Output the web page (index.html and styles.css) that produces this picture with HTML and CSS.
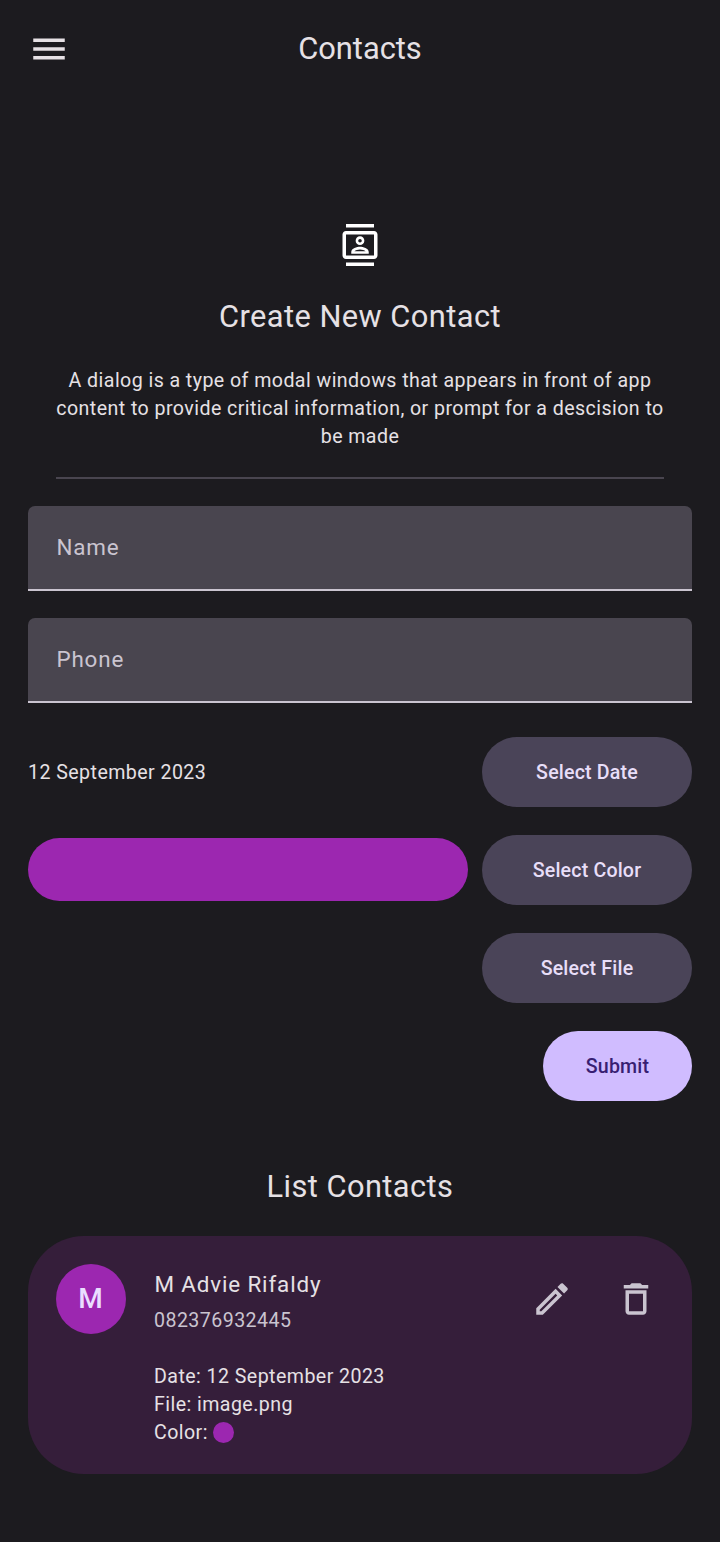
FILE: index.html
```html
<!DOCTYPE html>
<html lang="en">
<head>
<meta charset="utf-8">
<title>Contacts</title>
<link rel="stylesheet" href="styles.css">
</head>
<body>
<header class="appbar">
  <svg class="menu" viewBox="0 0 24 24"><path d="M3 18h18v-2H3v2zm0-5h18v-2H3v2zm0-7v2h18V6H3z"/></svg>
  <h1>Contacts</h1>
</header>
<main>
  <section class="intro">
    <svg class="intro-icon" viewBox="0 0 24 24"><path d="M20 4H4c-1.100 0-2 .9-2 2v12c0 1.100.9 2 2 2h16c1.100 0 2-.9 2-2V6c0-1.100-.9-2-2-2zm0 14H4V6h16v12zM4 0h16v2H4zm0 22h16v2H4zm8-10c1.380 0 2.500-1.120 2.500-2.500S13.380 7 12 7 9.500 8.120 9.500 9.500 10.620 12 12 12zm0-3.500c.55 0 1 .45 1 1s-.45 1-1 1-1-.45-1-1 .45-1 1-1zm5 7.490C17 13.900 13.690 13 12 13s-5 .9-5 2.990V17h10v-1.010zm-8.190-.49c.61-.52 2.030-1 3.190-1 1.170 0 2.590.48 3.200 1H8.810z"/></svg>
    <h2>Create New Contact</h2>
    <p>A dialog is a type of modal windows that appears in front of app<br>content to provide critical information, or prompt for a descision to<br>be made</p>
  </section>
  <form class="form">
    <div class="field">Name</div>
    <div class="field">Phone</div>
    <div class="row"><span class="date">12 September 2023</span><button type="button" class="btn">Select Date</button></div>
    <div class="row"><span class="swatch"></span><button type="button" class="btn">Select Color</button></div>
    <div class="row end"><button type="button" class="btn">Select File</button></div>
    <div class="row end"><button type="button" class="btn submit">Submit</button></div>
  </form>
  <h2 class="list-title">List Contacts</h2>
  <article class="card">
    <div class="avatar">M</div>
    <div class="info">
      <div class="name">M Advie Rifaldy</div>
      <div class="phone">082376932445</div>
      <div class="details">
        <div>Date: 12 September 2023</div>
        <div>File: image.png</div>
        <div class="color">Color: <i class="dot"></i></div>
      </div>
    </div>
    <div class="actions">
      <svg viewBox="0 0 24 24"><path d="M14.060 9.020l.92.92L5.920 19H5v-.92l9.060-9.060M17.660 3c-.25 0-.51.1-.7.29l-1.830 1.830 3.750 3.750 1.830-1.830c.39-.39.39-1.020 0-1.410l-2.340-2.340c-.2-.2-.45-.29-.71-.29zm-3.600 3.190L3 17.250V21h3.750L17.810 9.940l-3.750-3.750z"/></svg>
      <svg viewBox="0 0 24 24"><path d="M6 19c0 1.100.9 2 2 2h8c1.100 0 2-.9 2-2V7H6v12zM8 9h8v10H8V9zm7.500-5l-1-1h-5l-1 1H5v2h14V4h-3.500z"/></svg>
    </div>
  </article>
</main>
</body>
</html>
```
FILE: styles.css
```css
* { box-sizing: border-box; }
body { margin: 0; min-height: 1542px; background: #1c1b1f; color: #e6e1e5; font-family: Roboto, sans-serif; font-size: 19.6px; letter-spacing: .4375px; }
h1, h2, p { margin: 0; font-weight: 400; }
svg { fill: currentColor; display: block; }
.appbar { display: grid; grid-template-columns: 42px 1fr 42px; align-items: center; height: 98px; padding: 0 28px; }
.menu { width: 42px; height: 42px; }
h1 { font-size: 30.8px; line-height: 42px; letter-spacing: 0; text-align: center; padding-bottom: 1px; }
main { padding: 126px 28px 0; }
.intro { margin: 0 28px; height: 255px; display: flex; flex-direction: column; align-items: center; text-align: center; border-bottom: 2px solid #49454f; }
.intro-icon { width: 42px; height: 42px; color: #fff; }
h2 { font-size: 30.8px; line-height: 42px; letter-spacing: .4375px; }
.intro h2 { margin-top: 30px; }
.intro p { line-height: 28px; margin-top: 29px; white-space: nowrap; }
.form { display: flex; flex-direction: column; gap: 28px; margin-top: 27px; }
.field { height: 85px; padding: 0 28px 2px 28.4px; display: flex; align-items: center; background: #49454f; color: #cac4d0; border-radius: 7px 7px 0 0; border-bottom: 2px solid #cac4d0; font-size: 22.4px; letter-spacing: .875px; }
.field + .field { margin-top: -1px; }
.row { display: flex; align-items: center; justify-content: space-between; gap: 14px; height: 70px; }
.field + .row { margin-top: 6px; }
.end { justify-content: flex-end; }
.swatch { flex: 1; height: 63px; margin-bottom: 1px; border-radius: 32px; background: #9c27b0; }
.btn { border: 0; padding: 0; width: 210px; height: 70px; border-radius: 35px; background: #4a4458; color: #e8def8; font: 500 19.6px Roboto, sans-serif; letter-spacing: .175px; }
.submit { width: 149px; background: #d0bcff; color: #381e72; }
.list-title { margin-top: 65px; text-align: center; }
.card { margin-top: 28px; height: 238px; padding: 28px; border-radius: 56px; background: #351e3a; display: flex; align-items: flex-start; }
.avatar { width: 70px; height: 70px; padding: 0 1px 1px 0; border-radius: 50%; background: #9c27b0; color: #eaddff; display: grid; place-items: center; font-size: 28px; font-weight: 500; letter-spacing: 0; }
.info { flex: 1; margin-left: 28px; }
.name { font-size: 22.4px; line-height: 40px; padding-left: .4px; letter-spacing: .875px; }
.phone { margin-top: 3px; color: #cac4d0; line-height: 28px; }
.details { margin-top: 28px; line-height: 28px; }
.color { display: flex; align-items: center; gap: 5.5px; }
.dot { width: 21px; height: 21px; margin-bottom: 1px; border-radius: 50%; background: #9c27b0; }
.actions { display: flex; gap: 42px; padding: 14px 7px 0 0; color: #cac4d0; }
.actions svg { width: 42px; height: 42px; }
```
